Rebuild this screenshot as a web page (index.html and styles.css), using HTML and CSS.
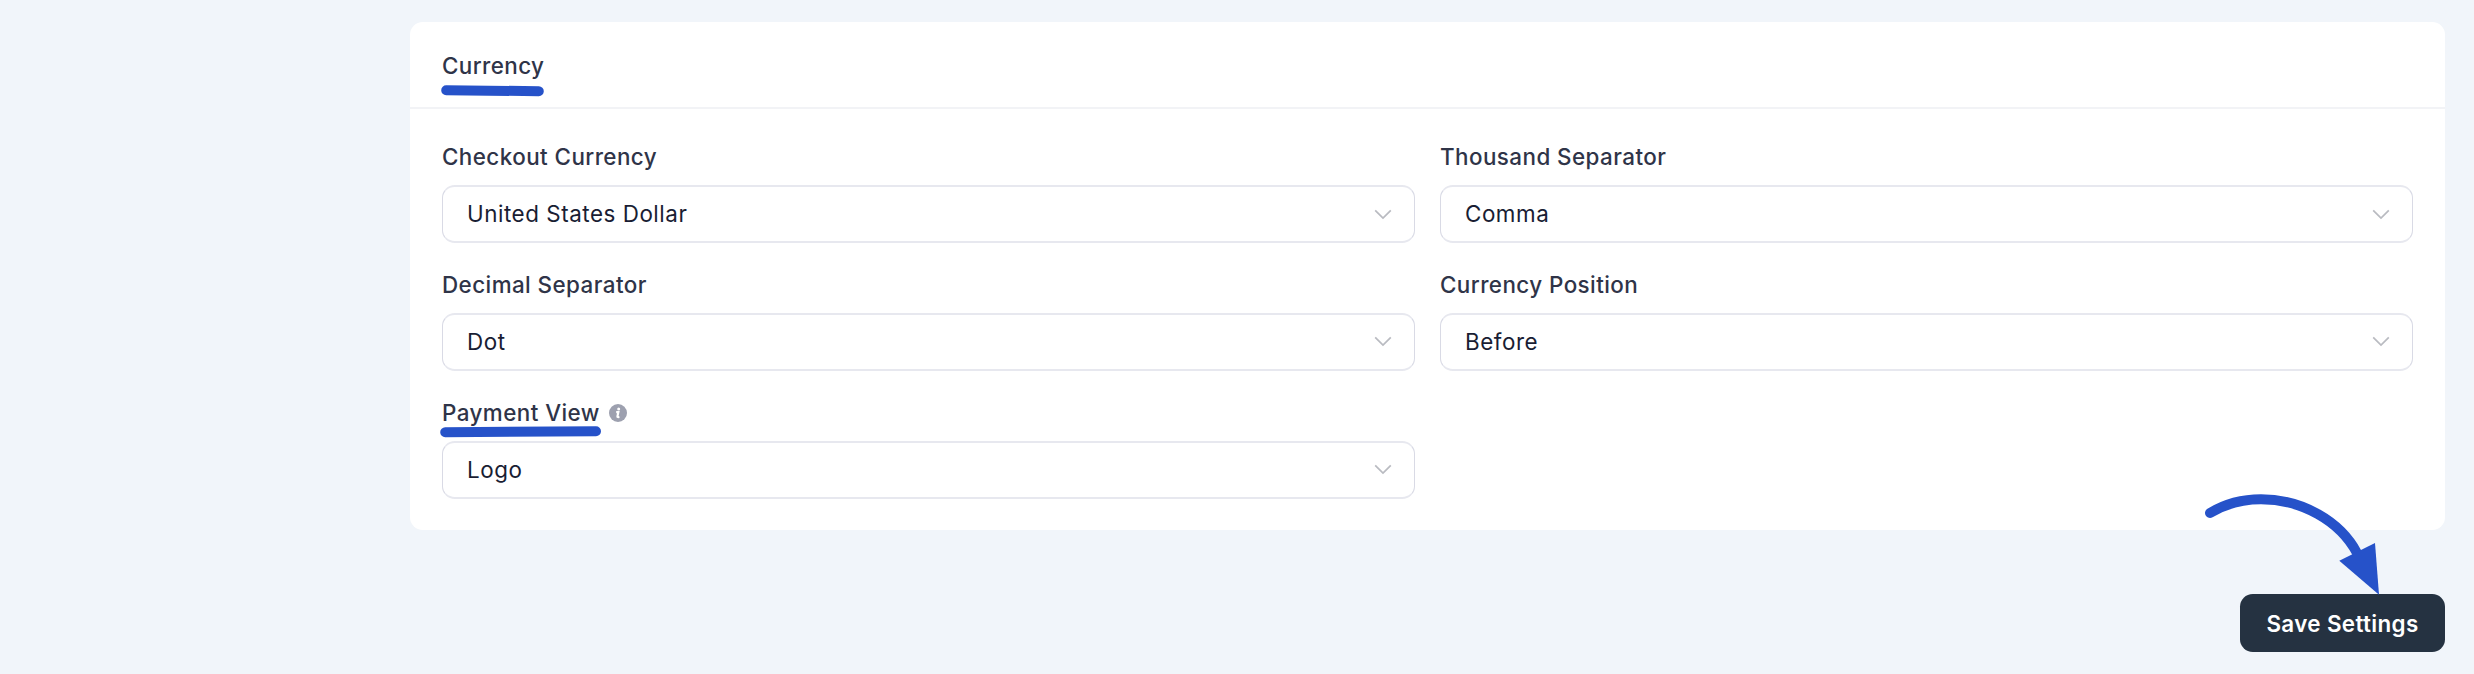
FILE: index.html
```
<!DOCTYPE html>
<html lang="en">
<head>
<meta charset="utf-8">
<title>Currency settings</title>
<link rel="stylesheet" href="styles.css">
</head>
<body>
<main class="page">
  <section class="card">
    <header class="card-header">
      <h2 class="card-title">Currency
        <svg class="mark mark-title" width="104" height="12" viewBox="0 0 104 12"><path d="M5.2 5.2 97.8 6.2"/></svg>
      </h2>
    </header>
    <div class="fields">
      <div class="field">
        <div class="label">Checkout Currency</div>
        <div class="select"><span>United States Dollar</span><svg class="chevron" width="18" height="11" viewBox="0 0 18 11"><path d="M1.2 1.3 9 9.1 16.8 1.3"/></svg></div>
      </div>
      <div class="field">
        <div class="label">Thousand Separator</div>
        <div class="select"><span>Comma</span><svg class="chevron" width="18" height="11" viewBox="0 0 18 11"><path d="M1.2 1.3 9 9.1 16.8 1.3"/></svg></div>
      </div>
      <div class="field">
        <div class="label">Decimal Separator</div>
        <div class="select raised"><span>Dot</span><svg class="chevron" width="18" height="11" viewBox="0 0 18 11"><path d="M1.2 1.3 9 9.1 16.8 1.3"/></svg></div>
      </div>
      <div class="field">
        <div class="label">Currency Position</div>
        <div class="select raised"><span>Before</span><svg class="chevron" width="18" height="11" viewBox="0 0 18 11"><path d="M1.2 1.3 9 9.1 16.8 1.3"/></svg></div>
      </div>
      <div class="field">
        <div class="label">Payment View
          <svg class="info" width="18" height="18" viewBox="0 0 18 18"><circle class="info-disc" cx="9" cy="9" r="9"/><circle class="info-dot" cx="9.7" cy="5" r="1.5"/><path class="info-stem" d="M7.2 8.1H9.4L8.4 12.4Q8.2 13.4 10.4 13"/></svg>
          <svg class="mark mark-label" width="162" height="12" viewBox="0 0 162 12"><path d="M5.2 6.2 156 5.2"/></svg>
        </div>
        <div class="select raised"><span>Logo</span><svg class="chevron" width="18" height="11" viewBox="0 0 18 11"><path d="M1.2 1.3 9 9.1 16.8 1.3"/></svg></div>
      </div>
    </div>
  </section>
  <div class="actions">
    <button class="save" type="button">Save Settings</button>
    <svg class="arrow" width="180" height="106" viewBox="2203 490 180 106"><path class="arrow-line" d="M2210 513C2225 504 2243 499.3 2261 499.3C2302 499.3 2340 521 2357 553"/><path class="arrow-head" d="M2339.3 560.7 2375 543 2379 594.7Z"/></svg>
  </div>
</main>
</body>
</html>
```
FILE: styles.css
```
* { box-sizing: border-box; }

body {
  margin: 0;
  background: #f1f5fa;
  font-family: Inter, "Liberation Sans", sans-serif;
  font-size: 22.4px;
  line-height: 32px;
}

.page {
  height: 674px;
  padding: 22px 29px 0 410px;
  overflow: hidden;
}

.card {
  height: 508.4px;
  background: #fff;
  border-radius: 12.8px;
}

.card-header {
  height: 87px;
  padding: 27.5px 32px 0;
  border-bottom: 2px solid #f2f3f6;
}

.card-title {
  position: relative;
  width: max-content;
  margin: 0;
  color: #2f3448;
  font-size: inherit;
  font-weight: 500;
  letter-spacing: 0.42px;
}

.fields {
  display: grid;
  grid-template-columns: 1fr 1fr;
  gap: 25px;
  padding: 31px 32px 0;
}

.label {
  position: relative;
  display: flex;
  align-items: center;
  gap: 9px;
  width: max-content;
  padding-top: 0.5px;
  margin-bottom: 12.5px;
  color: #2f3448;
  font-weight: 500;
  letter-spacing: 0.44px;
}

.select {
  display: flex;
  align-items: center;
  justify-content: space-between;
  height: 58px;
  padding: 0 22px 0 24px;
  border: solid #e7e8ef;
  border-width: 2px 1px;
  border-left-color: #d9dae5;
  border-right-color: #d9dae5;
  border-radius: 12.8px;
  color: #191d33;
  letter-spacing: 0.54px;
}

.raised { padding-bottom: 1px; }

.chevron {
  fill: none;
  stroke: #b9bbc1;
  stroke-width: 1.7;
}

.info-disc { fill: #9da0af; }
.info-dot { fill: #fff; }

.info-stem {
  fill: none;
  stroke: #fff;
  stroke-width: 2.1;
}

.mark {
  position: absolute;
  fill: none;
  stroke: #2652c9;
  stroke-width: 10;
  stroke-linecap: round;
}

.mark-title { left: -1px; top: 35.5px; }
.mark-label { left: -2px; top: 30px; }

.actions {
  position: relative;
  display: flex;
  justify-content: flex-end;
  padding-top: 63.8px;
}

.save {
  width: 205px;
  height: 58px;
  padding: 1px 0 0;
  border: 0;
  border-radius: 12.8px;
  background: #253241;
  color: #fff;
  font: inherit;
  font-weight: 600;
  letter-spacing: 0.36px;
}

.arrow {
  position: absolute;
  right: 62px;
  top: -40.4px;
}

.arrow-line {
  fill: none;
  stroke: #2652c9;
  stroke-width: 10;
  stroke-linecap: round;
}

.arrow-head { fill: #2652c9; }
```
